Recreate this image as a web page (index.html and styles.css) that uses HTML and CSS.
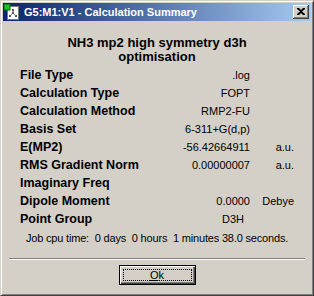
FILE: index.html
```html
<!DOCTYPE html>
<html>
  <head>
    <title>Calculation Summary</title>
    <link rel="stylesheet" href="styles.css">
  </head>
  <body>
    <div class="window">
      <div class="title-bar">
        <svg class="app-icon" width="16" height="16" viewBox="0 0 16 16">
          <rect x="3.5" y="2.5" width="11" height="13" fill="#fff" stroke="#7a7a7a"/>
          <rect x="0" y="0" width="6" height="6" fill="#1fbf2a" stroke="#0b6b12" stroke-width="1"/>
          <path d="M9 6 L9 9 M6 12 L9 9 L12 12" stroke="#707070" stroke-width="1" fill="none"/>
          <rect x="8" y="5" width="2" height="2" fill="#555"/>
          <rect x="8" y="8" width="2" height="2" fill="#555"/>
          <rect x="5" y="11" width="2" height="2" fill="#555"/>
          <rect x="11" y="11" width="2" height="2" fill="#555"/>
        </svg>
        <span class="title-text">G5:M1:V1 - Calculation Summary</span>
        <div class="close-btn">
          <svg width="8" height="7" viewBox="0 0 8 7">
            <path d="M0 0h2l2 2 2-2h2v1L5 3.5 8 6v1H6L4 5 2 7H0V6l3-2.5L0 1z" fill="#000"/>
          </svg>
        </div>
      </div>

      <div class="content">
        <div class="heading">NH3 mp2 high symmetry d3h<br>optimisation</div>

        <div class="rows">
          <div class="row"><span class="label">File Type</span><span class="value">.log</span><span class="unit"></span></div>
          <div class="row"><span class="label">Calculation Type</span><span class="value">FOPT</span><span class="unit"></span></div>
          <div class="row"><span class="label">Calculation Method</span><span class="value">RMP2-FU</span><span class="unit"></span></div>
          <div class="row"><span class="label">Basis Set</span><span class="value">6-311+G(d,p)</span><span class="unit"></span></div>
          <div class="row"><span class="label">E(MP2)</span><span class="value">-56.42664911</span><span class="unit">a.u.</span></div>
          <div class="row"><span class="label">RMS Gradient Norm</span><span class="value">0.00000007</span><span class="unit">a.u.</span></div>
          <div class="row"><span class="label">Imaginary Freq</span><span class="value"></span><span class="unit"></span></div>
          <div class="row"><span class="label">Dipole Moment</span><span class="value">0.0000</span><span class="unit">Debye</span></div>
          <div class="row"><span class="label">Point Group</span><span class="value short">D3H</span><span class="unit"></span></div>
        </div>

        <div class="cpu-time">Job cpu time:  0 days  0 hours  1 minutes 38.0 seconds.</div>

        <div class="separator"></div>

        <div class="buttons">
          <button type="button" class="ok-btn"><u>O</u>k</button>
        </div>
      </div>
    </div>
  </body>
</html>
```

FILE: styles.css
```css
body {
  margin: 0;
  width: 314px;
  height: 296px;
  overflow: hidden;
  font-family: "Liberation Sans", Arial, sans-serif;
  font-size: 11px;
  color: #000;
  background-color: #d4d0c8;
}

.window {
  box-sizing: border-box;
  width: 314px;
  height: 296px;
  padding: 2px;
  background-color: #d4d0c8;
  border: 1px solid;
  border-color: #d4d0c8 #404040 #404040 #d4d0c8;
  box-shadow: inset 1px 1px #fff, inset -1px -1px #808080;
}

.title-bar {
  display: flex;
  align-items: center;
  height: 18px;
  padding: 0 2px 0 1px;
  background: linear-gradient(to right, #0a246a, #a6caf0);
}

.app-icon {
  flex: none;
}

.title-text {
  margin-left: 4px;
  color: #fff;
  font-weight: bold;
  font-size: 11px;
  white-space: nowrap;
}

.close-btn {
  box-sizing: border-box;
  display: flex;
  align-items: center;
  justify-content: center;
  width: 16px;
  height: 14px;
  margin-left: auto;
  background-color: #d4d0c8;
  border-right: 1px solid #404040;
  border-bottom: 1px solid #404040;
  box-shadow: inset 1px 1px #fff, inset -1px -1px #808080;
}

.content {
  display: flex;
  flex-direction: column;
}

.heading {
  margin-top: 15px;
  text-align: center;
  font-weight: bold;
  font-size: 13px;
  line-height: 14px;
}

.rows {
  margin-top: 2px;
  padding: 0 17px;
}

.row {
  display: flex;
  align-items: center;
  height: 18px;
}

.label {
  flex: 1;
  font-weight: bold;
  font-size: 12.5px;
}

.value {
  text-align: right;
}

.value.short {
  padding-right: 6px;
}

.unit {
  width: 38px;
  margin-left: 6px;
  text-align: right;
}

.cpu-time {
  margin-top: 3px;
  line-height: 14px;
  text-align: center;
  white-space: pre;
  letter-spacing: -0.18px;
}

.separator {
  margin: 13px 6px 0 6px;
  border-top: 1px solid #808080;
  border-bottom: 1px solid #fff;
}

.buttons {
  display: flex;
  justify-content: center;
  margin-top: 5px;
}

.ok-btn {
  position: relative;
  box-sizing: border-box;
  width: 77px;
  height: 20px;
  padding: 0;
  font-family: "Liberation Sans", Arial, sans-serif;
  font-size: 11px;
  color: #000;
  background-color: #d4d0c8;
  border: 1px solid #000;
  box-shadow: inset 1px 1px #fff, inset -1px -1px #404040, inset -2px -2px #808080;
}

.ok-btn::after {
  content: "";
  position: absolute;
  top: 3px;
  left: 3px;
  right: 3px;
  bottom: 3px;
  border: 1px dotted #000;
}
```
